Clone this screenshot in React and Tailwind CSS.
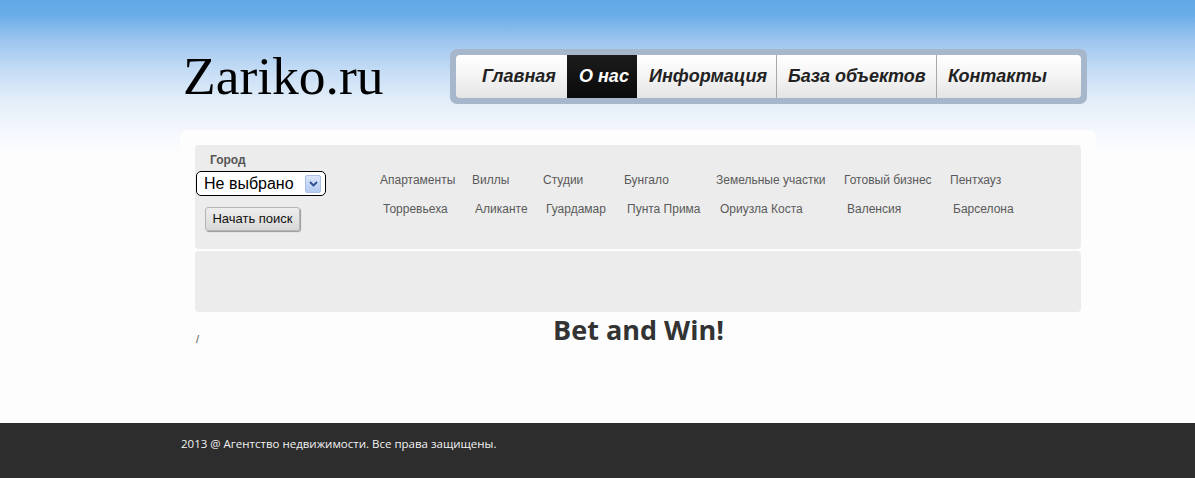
import React from "react";

const row1 = [
  ["Апартаменты", 92],
  ["Виллы", 71],
  ["Студии", 81],
  ["Бунгало", 92],
  ["Земельные участки", 128],
  ["Готовый бизнес", 106],
  ["Пентхауз", 90],
];
const row2 = [
  ["Торревьеха", 92],
  ["Аликанте", 71],
  ["Гуардамар", 81],
  ["Пунта Прима", 93],
  ["Ориузла Коста", 127],
  ["Валенсия", 106],
  ["Барселона", 90],
];

export default function App() {
  return (
    <div className="w-[1195px] h-[478px] overflow-hidden flex flex-col bg-[#fdfdfd] font-['Liberation_Sans',Arial,sans-serif]">
      <div className="h-[423px] bg-[linear-gradient(#62a8e6_0px,#68abe7_14px,#9cc5ef_40px,#c4dcf5_70px,#e2edf9_100px,#f3f7fd_128px,#fdfdfd_155px)]">
        {/* header */}
        <div className="flex items-start pt-[49px] pl-[183px] h-[130px]">
          <div className="w-[267px] font-['Liberation_Serif','Times_New_Roman',serif] text-[53.5px] leading-[54px] text-black">
            Zariko.ru
          </div>
          <div className="w-[637px] h-[55px] rounded-[7px] bg-[#a7b7cb] p-[6px]">
            <div className="h-[43px] rounded-[4px] bg-[linear-gradient(#ffffff,#f4f4f4_50%,#e4e4e4)] flex items-stretch text-[18px] font-bold italic text-[#222] pl-[15px] overflow-hidden">
              <div className="w-[96px] pl-[11px] flex items-center">Главная</div>
              <div className="w-[70px] pl-[12px] flex items-center bg-[linear-gradient(#1c1c1c,#0a0a0a)] text-white">О нас</div>
              <div className="w-[140px] pl-[12px] flex items-center border-r border-[#a9a9a9]">Информация</div>
              <div className="w-[160px] pl-[11px] flex items-center border-r border-[#a9a9a9]">База объектов</div>
              <div className="pl-[11px] flex items-center">Контакты</div>
            </div>
          </div>
        </div>

        {/* main container */}
        <div className="ml-[180px] w-[916px] h-[262px] rounded-[6px] bg-[#fdfdfd] shadow-[0_0_2px_rgba(0,0,0,0.04)] p-[15px] flex flex-col">
          <div className="h-[104px] rounded-[4px] bg-[#ececec] flex">
            <div className="w-[185px] flex flex-col pt-[8px]">
              <div className="pl-[15px] text-[12px] font-bold text-[#555] leading-[14px]">Город</div>
              <div className="mt-[4px] ml-[1px] w-[130px] h-[25px] rounded-[5px] border border-black bg-white flex items-center pl-[7px] pr-[4px]">
                <span className="text-[16px] text-black leading-none flex-1">Не выбрано</span>
                <span className="w-[16px] h-[18px] rounded-[2px] bg-[linear-gradient(#d9e5fa,#b5caf0)] border border-[#a9bfe8] flex items-center justify-center">
                  <svg width="9" height="6" viewBox="0 0 9 6">
                    <path d="M1 1 L4.5 4.5 L8 1" stroke="#2c4c8f" strokeWidth="1.8" fill="none" />
                  </svg>
                </span>
              </div>
              <div className="mt-[11px] ml-[10px] w-[95px] h-[24px] rounded-[3px] border border-[#b5b5b5] bg-[linear-gradient(#eeeeee,#d8d8d8)] shadow-[1px_1px_1px_rgba(0,0,0,0.35)] flex items-center justify-center text-[13px] text-[#111]">
                Начать поиск
              </div>
            </div>
            <div className="flex flex-col pt-[28px] text-[12px] text-[#5a5a5a] leading-[14px]">
              <div className="flex">
                {row1.map(([t, w]) => (
                  <div key={t} style={{ width: w }}>{t}</div>
                ))}
              </div>
              <div className="flex mt-[15px] pl-[3px]">
                {row2.map(([t, w]) => (
                  <div key={t} style={{ width: w }}>{t}</div>
                ))}
              </div>
            </div>
          </div>
          <div className="mt-[2px] h-[61px] rounded-[4px] bg-[#ececec]" />
          <div className="flex items-start">
            <span className="w-0 pt-[22px] pl-[1px] text-[11px] text-[#555] whitespace-nowrap leading-none">/</span>
            <h1 className="flex-1 text-center font-['Open_Sans',sans-serif] font-bold text-[27px] leading-[34px] text-[#333] pt-[1px]">
              Bet and Win!
            </h1>
          </div>
        </div>
      </div>
      <footer className="h-[55px] bg-[#2d2d2d] pl-[181px] pt-[13px]">
        <div className="font-['Open_Sans',sans-serif] text-[11.5px] text-[#f2f2f2] leading-[16px]">
          2013 @ Агентство недвижимости. Все права защищены.
        </div>
      </footer>
    </div>
  );
}
